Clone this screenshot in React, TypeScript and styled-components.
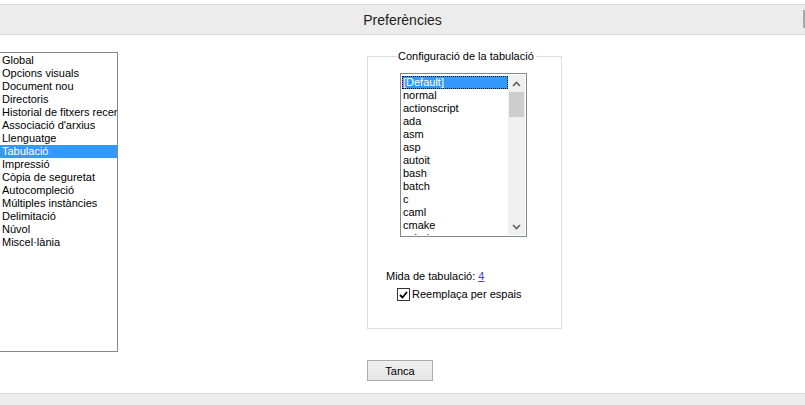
import React from "react";
import styled, { createGlobalStyle } from "styled-components";

const Global = createGlobalStyle`
  html, body { margin: 0; padding: 0; background: #ffffff; }
  body { font-family: "Liberation Sans", Arial, sans-serif; font-size: 11px; color: #000; }
  * { box-sizing: border-box; }
`;

const Page = styled.div`
  width: 805px;
  height: 405px;
  display: flex;
  flex-direction: column;
  overflow: hidden;
  background: #fff;
  position: relative;
`;

const TitleBar = styled.header`
  margin-top: 4px;
  height: 31px;
  background: #ececec;
  border-top: 1px solid #d9d9d9;
  border-bottom: 1px solid #d9d9d9;
  display: flex;
  align-items: center;
  justify-content: center;
  position: relative;
`;

const Title = styled.h1`
  margin: 0;
  font-family: "Liberation Sans", Arial, sans-serif;
  font-weight: normal;
  font-size: 14px;
  color: #222;
`;

const EdgeTab = styled.div`
  position: absolute;
  right: 0;
  top: 5px;
  width: 2px;
  height: 18px;
  background: #a8a8a8;
`;

const Body = styled.main`
  flex: 1;
  display: flex;
  align-items: flex-start;
`;

const NavList = styled.ul`
  list-style: none;
  margin: 17px 0 0 -1px;
  padding: 1px 0 0 0;
  width: 119px;
  height: 300px;
  border: 1px solid #828790;
  overflow: hidden;
`;

const NavItem = styled.li<{ $active?: boolean }>`
  height: 13px;
  line-height: 13px;
  padding-left: 2px;
  white-space: nowrap;
  overflow: hidden;
  background: ${(p) => (p.$active ? "#3399ff" : "transparent")};
  color: ${(p) => (p.$active ? "#fff" : "#000")};
`;

const RightColumn = styled.section`
  margin-left: 249px;
  display: flex;
  flex-direction: column;
  align-items: flex-start;
`;

const Group = styled.fieldset`
  margin: 14px 0 0 0;
  padding: 0;
  width: 195px;
  height: 280px;
  border: 1px solid #dcdcdc;
  display: flex;
  flex-direction: column;
  align-items: flex-start;
`;

const Legend = styled.legend`
  margin-left: 29px;
  padding: 0 2px 0 1px;
  font-size: 11px;
  line-height: 14px;
  color: #000;
`;

const ListBox = styled.div`
  margin: 10px 0 0 32px;
  width: 127px;
  height: 164px;
  border: 1px solid #828790;
  padding: 1px;
  display: flex;
  overflow: hidden;
`;

const Options = styled.ul`
  list-style: none;
  margin: 0;
  padding: 1px 0 0 0;
  flex: 1;
  overflow: hidden;
`;

const Option = styled.li<{ $active?: boolean }>`
  height: 13px;
  line-height: 13px;
  padding-left: 1px;
  white-space: nowrap;
  background: ${(p) => (p.$active ? "#3399ff" : "transparent")};
  color: ${(p) => (p.$active ? "#fff" : "#000")};
  outline: ${(p) => (p.$active ? "1px dotted #000" : "none")};
  outline-offset: -1px;
`;

const ScrollBar = styled.div`
  width: 17px;
  background: #f0f0f0;
  display: flex;
  flex-direction: column;
  align-items: center;
`;

const Arrow = styled.div`
  width: 17px;
  height: 17px;
  display: flex;
  align-items: center;
  justify-content: center;
`;

const Thumb = styled.div`
  width: 15px;
  height: 25px;
  background: #cdcdcd;
`;

const Track = styled.div`
  flex: 1;
`;

const SizeRow = styled.div`
  margin: 33px 0 0 18px;
  line-height: 13px;
`;

const SizeLink = styled.a`
  color: #3b3bd8;
  text-decoration: underline;
`;

const CheckRow = styled.label`
  margin: 5px 0 0 29px;
  display: flex;
  align-items: center;
  gap: 2px;
  line-height: 13px;
`;

const CheckBox = styled.span`
  width: 13px;
  height: 13px;
  border: 1px solid #333;
  background: #fff;
  display: flex;
  align-items: center;
  justify-content: center;
`;

const Button = styled.button`
  margin-top: 31px;
  width: 66px;
  height: 21px;
  border: 1px solid #acacac;
  background: linear-gradient(#f0f0f0, #e5e5e5);
  font-family: "Liberation Sans", Arial, sans-serif;
  font-size: 11px;
  color: #000;
  padding: 0;
`;

const Footer = styled.footer`
  height: 12px;
  background: #ececec;
  border-top: 1px solid #d9d9d9;
`;

const navItems = [
  "Global",
  "Opcions visuals",
  "Document nou",
  "Directoris",
  "Historial de fitxers recents",
  "Associació d'arxius",
  "Llenguatge",
  "Tabulació",
  "Impressió",
  "Còpia de seguretat",
  "Autocompleció",
  "Múltiples instàncies",
  "Delimitació",
  "Núvol",
  "Miscel·lània",
];

const langs = [
  "[Default]",
  "normal",
  "actionscript",
  "ada",
  "asm",
  "asp",
  "autoit",
  "bash",
  "batch",
  "c",
  "caml",
  "cmake",
  "cobol",
];

const Chevron = ({ up }: { up?: boolean }) => (
  <svg width="9" height="6" viewBox="0 0 9 6">
    <path
      d={up ? "M1 5 L4.5 1.5 L8 5" : "M1 1 L4.5 4.5 L8 1"}
      fill="none"
      stroke="#606060"
      strokeWidth="1.6"
    />
  </svg>
);

export default function App() {
  return (
    <Page>
      <Global />
      <TitleBar>
        <Title>Preferències</Title>
        <EdgeTab />
      </TitleBar>
      <Body>
        <NavList>
          {navItems.map((n) => (
            <NavItem key={n} $active={n === "Tabulació"}>
              {n}
            </NavItem>
          ))}
        </NavList>
        <RightColumn>
          <Group>
            <Legend>Configuració de la tabulació</Legend>
            <ListBox>
              <Options>
                {langs.map((l, i) => (
                  <Option key={l} $active={i === 0}>
                    {l}
                  </Option>
                ))}
              </Options>
              <ScrollBar>
                <Arrow>
                  <Chevron up />
                </Arrow>
                <Thumb />
                <Track />
                <Arrow>
                  <Chevron />
                </Arrow>
              </ScrollBar>
            </ListBox>
            <SizeRow>
              Mida de tabulació: <SizeLink href="#">4</SizeLink>
            </SizeRow>
            <CheckRow>
              <CheckBox>
                <svg width="9" height="8" viewBox="0 0 9 8">
                  <path d="M1 4 L3.5 6.5 L8 1" fill="none" stroke="#000" strokeWidth="1.8" />
                </svg>
              </CheckBox>
              Reemplaça per espais
            </CheckRow>
          </Group>
          <Button>Tanca</Button>
        </RightColumn>
      </Body>
      <Footer />
    </Page>
  );
}
